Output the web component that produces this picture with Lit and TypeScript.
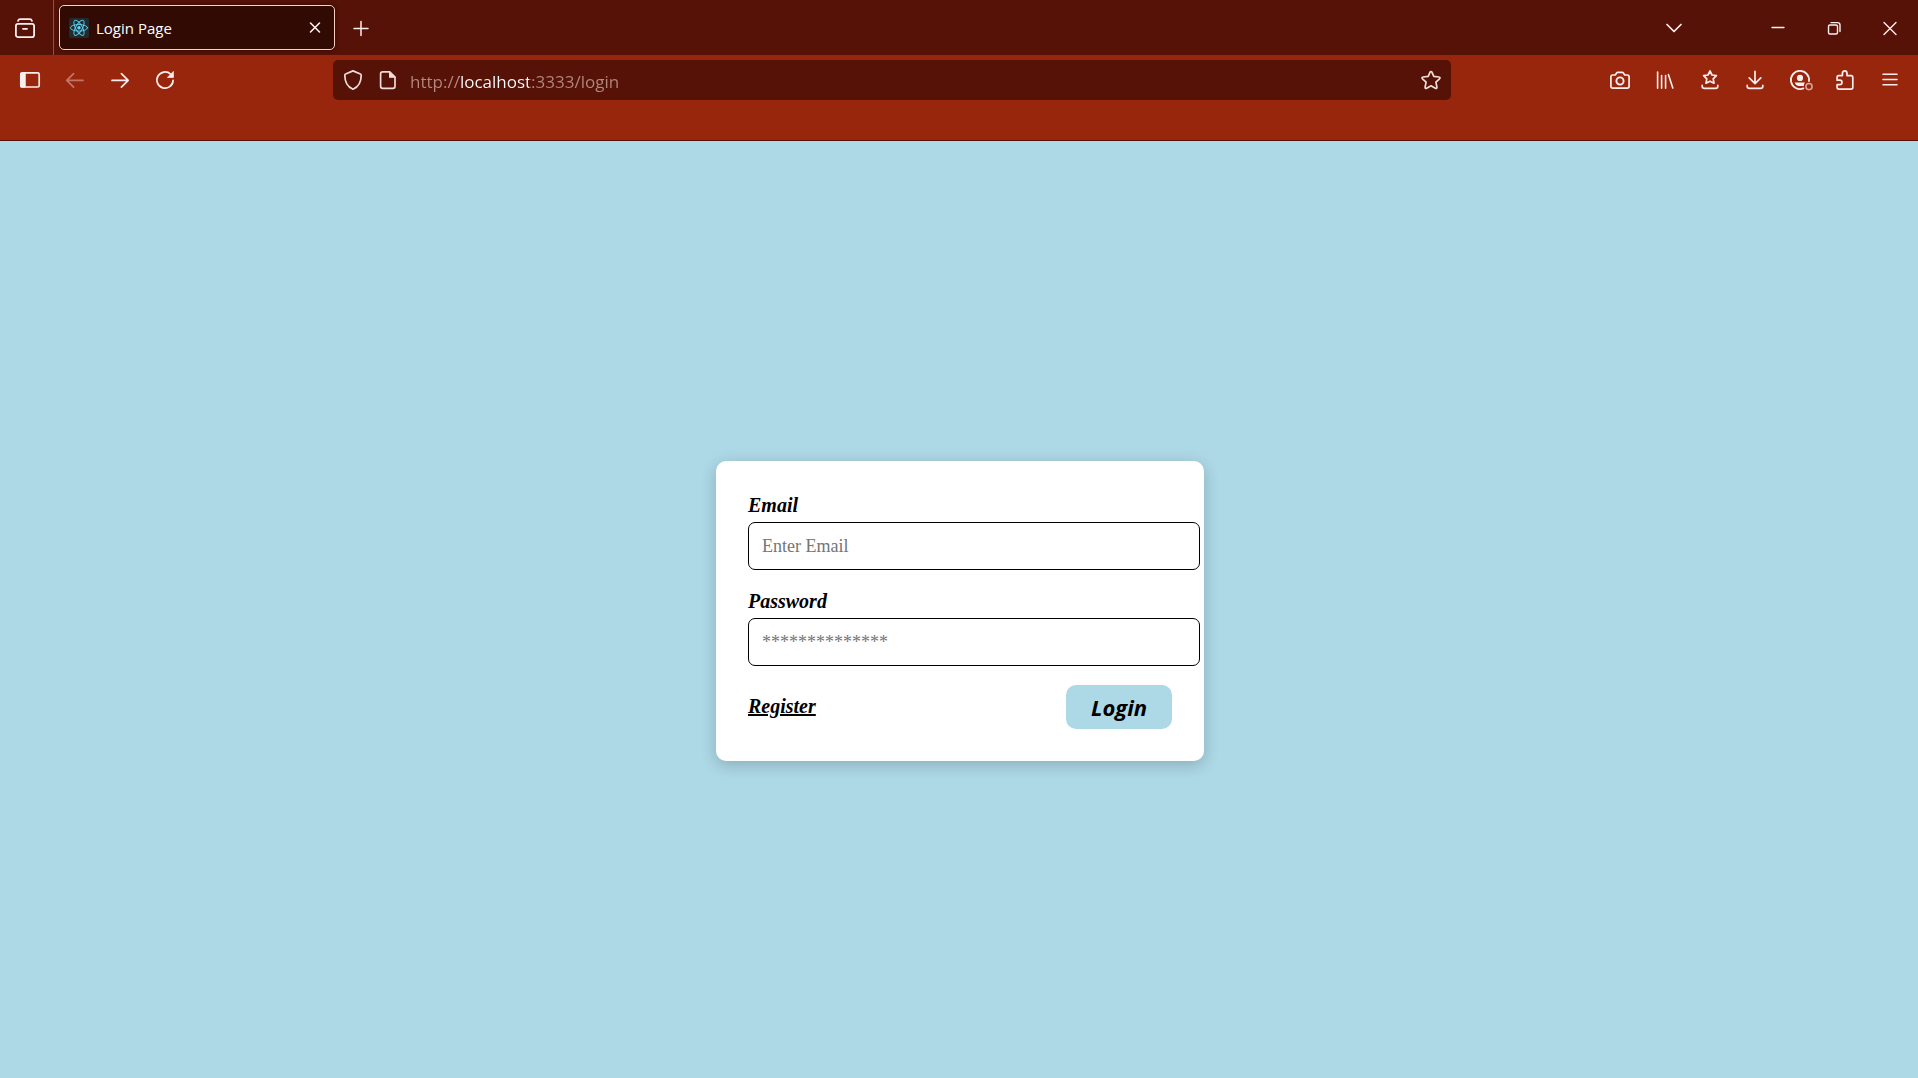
import { LitElement, html, css, svg } from "lit";
import { customElement } from "lit/decorators.js";

const icon = (body: unknown) => html`
  <svg class="icon" width="20" height="20" viewBox="0 0 20 20" fill="none" stroke="currentColor"
    stroke-width="1.7" stroke-linecap="round" stroke-linejoin="round" aria-hidden="true">${body}</svg>`;

const icons = {
  recent: icon(svg`<rect x="0.9" y="5.9" width="18.2" height="13.2" rx="2.2" stroke-width="1.8"/>
    <path d="M3 3 Q3.4 1.2 5.4 1.2 H14.6 Q16.6 1.2 17 3"/><path d="M8 10.8 H12" stroke-width="1.8"/>`),
  react: icon(svg`<rect width="20" height="20" rx="2" fill="#222b30" stroke="none"/>
    <g stroke="#61dafb" stroke-opacity="0.85" stroke-width="1"><ellipse cx="10" cy="9.8" rx="8.6" ry="3.3"/>
    <ellipse cx="10" cy="9.8" rx="8.6" ry="3.3" transform="rotate(60 10 9.8)"/>
    <ellipse cx="10" cy="9.8" rx="8.6" ry="3.3" transform="rotate(120 10 9.8)"/></g>
    <circle cx="10" cy="9.8" r="1.7" fill="#61dafb" stroke="none"/>`),
  closeTab: icon(svg`<path d="M5.5 5 L14.5 14 M14.5 5 L5.5 14" stroke-width="1.6"/>`),
  plus: icon(svg`<path d="M3 10.5 H17 M10 3.5 V17.5" stroke-width="1.5"/>`),
  chevron: icon(svg`<path d="M3 6.5 L10 13.5 L17 6.5"/>`),
  minimize: icon(svg`<path d="M4 9.5 H16" stroke-width="1.3"/>`),
  restore: icon(svg`<rect x="4.5" y="7" width="9" height="9" rx="1.5" stroke-width="1.4"/>
    <path d="M7 4.6 H13.5 Q16 4.6 16 7 V13.5" stroke-width="1.4"/>`),
  closeWindow: icon(svg`<path d="M4 4.5 L16 16.5 M16 4.5 L4 16.5" stroke-width="1.4"/>`),
  sidebar: icon(svg`<rect x="0.8" y="2.8" width="18.4" height="14.2" rx="1.6"/>
    <path d="M1 3 H5.2 V17 H1 Z" fill="currentColor" stroke-width="1"/>`),
  back: icon(svg`<path d="M18 10.4 H2 M8.6 3.6 L1.8 10.4 L8.6 17.2"/>`),
  forward: icon(svg`<path d="M2 10.4 H18 M11.4 3.6 L18.2 10.4 L11.4 17.2"/>`),
  reload: icon(svg`<path d="M15.6 4.2 A8.1 8.1 0 1 0 18.1 10.4"/>
    <path d="M18.4 1.8 V7.4 H12.8 Z" fill="currentColor" stroke-width="0.8"/>`),
  shield: icon(svg`<path d="M10 0.9 L17.4 4 Q18.2 4.3 18.2 5.2 C18.2 12 15.6 16.8 10 19.2 C4.4 16.8 1.8 12 1.8 5.2 Q1.8 4.3 2.6 4 Z"/>`),
  page: icon(svg`<path d="M11.6 1.9 H4.6 Q2.6 1.9 2.6 3.9 V16.3 Q2.6 18.3 4.6 18.3 H15 Q17 18.3 17 16.3 V7.2 Z"/>
    <path d="M11.6 1.9 V7.2 H17 Z" fill="currentColor" stroke-width="1.2"/>`),
  star: icon(svg`<path d="M10 1.5 Q10.6 1.5 10.9 2.2 L12.8 6.4 L17.9 7 Q19.8 7.3 18.5 8.8 L14.9 12.2 L15.9 17 Q16 18.9 14.3 18.2 L10 15.8 L5.7 18.2 Q4 18.9 4.1 17 L5.1 12.2 L1.5 8.8 Q0.2 7.3 2.1 7 L7.2 6.4 L9.1 2.2 Q9.4 1.5 10 1.5 Z"/>`),
  camera: icon(svg`<path d="M2.8 5 H5.3 L6.6 3 Q7 2.3 7.8 2.3 H12.2 Q13 2.3 13.4 3 L14.7 5 H17.2 Q19.1 5 19.1 6.9 V16.3 Q19.1 18.2 17.2 18.2 H2.8 Q0.9 18.2 0.9 16.3 V6.9 Q0.9 5 2.8 5 Z"/>
    <circle cx="10" cy="11" r="3.6" stroke-width="1.9"/>`),
  library: icon(svg`<path d="M2.6 2 V18.3 M6.6 5.5 V18.3 M10.6 5.5 V18.3 M13.4 4.5 L17.8 18" stroke-width="1.6"/>`),
  bookmarks: icon(svg`<path d="M10 1 L12 5 L16.4 5.7 L13.2 8.8 L14 13.2 L10 11.2 L6 13.2 L6.8 8.8 L3.6 5.7 L8 5 Z"/>
    <path d="M2.2 15.4 V16.3 Q2.2 18.4 4.4 18.4 H15.6 Q17.8 18.4 17.8 16.3 V15.4"/>`),
  download: icon(svg`<path d="M10 1.4 V13.2 M4.2 7.8 L10 13.6 L15.8 7.8"/>
    <path d="M2.2 15.4 V16.3 Q2.2 18.4 4.4 18.4 H15.6 Q17.8 18.4 17.8 16.3 V15.4"/>`),
  account: icon(svg`<path d="M13.4 18.4 A9.1 9.1 0 1 1 19 11.2" stroke-width="1.8"/>
    <circle cx="10" cy="7.9" r="3.1" fill="currentColor" stroke="none"/>
    <path d="M4.6 12.4 H15 Q13.8 13.8 13.8 16 H8.4 Q5.6 15.4 4.6 12.4 Z" fill="currentColor" stroke="none"/>
    <circle cx="19" cy="16.6" r="3.1" stroke-opacity="0.65" stroke-width="1.5"/>`),
  extensions: icon(svg`<path d="M3.6 5.6 H7.4 V3.4 Q7.4 0.9 9.7 0.9 Q12 0.9 12 3.4 V5.6 H16 Q17.8 5.6 17.8 7.4 V17.3 Q17.8 19.1 16 19.1 H3.9 Q2.1 19.1 2.1 17.3 V14.6 H4.6 Q7 14.6 7 12.4 Q7 10.2 4.6 10.2 H2.1 V7.4 Q2.1 5.6 3.6 5.6 Z"/>`),
  menu: icon(svg`<path d="M3 4.3 H17 M3 9.5 H17 M3 14.7 H17" stroke-width="1.5"/>`),
};

const action = (label: string, glyph: unknown, disabled = false) => html`
  <button class="tool" type="button" aria-label=${label} ?disabled=${disabled}>${glyph}</button>`;

@customElement("browser-tabs")
class BrowserTabs extends LitElement {
  static styles = css`
    :host { display: flex; align-items: stretch; height: 55px; background: #561206; color: #fbeeee; }
    button { display: flex; align-items: center; justify-content: center; padding: 0; border: 0; background: none; color: inherit; }
    .recent { width: 54px; padding-right: 3px; border-right: 1px solid #8a5148; }
    .tab { box-sizing: border-box; display: flex; align-items: center; gap: 7px; width: 276px; margin: 5px; padding: 0 9px;
      border: 1px solid #fbcfc6; border-radius: 5px; background: #310a03; box-shadow: 0 0 4px rgba(0, 0, 0, 0.5); }
    .title { flex: 1; font: 15px/20px "Open Sans", "Noto Sans", sans-serif; color: #fff; }
    .close { width: 20px; height: 20px; }
    .add { width: 42px; }
    .filler { flex: 1; }
    .list { width: 40px; margin-right: 56px; }
    .window { width: 56px; }
    .icon { display: block; }
  `;
  render() {
    return html`
      <button class="recent" type="button" aria-label="Recent browsing">${icons.recent}</button>
      <div class="tab">${icons.react}<span class="title">Login Page</span>
        <button class="close" type="button" aria-label="Close tab">${icons.closeTab}</button></div>
      <button class="add" type="button" aria-label="New tab">${icons.plus}</button>
      <div class="filler"></div>
      <button class="list" type="button" aria-label="List all tabs">${icons.chevron}</button>
      <button class="window" type="button" aria-label="Minimize">${icons.minimize}</button>
      <button class="window" type="button" aria-label="Restore">${icons.restore}</button>
      <button class="window" type="button" aria-label="Close window">${icons.closeWindow}</button>`;
  }
}

@customElement("browser-toolbar")
class BrowserToolbar extends LitElement {
  static styles = css`
    :host { box-sizing: border-box; display: flex; align-items: flex-start; height: 86px; padding: 5px 6px 0 7px;
      border-bottom: 1px solid #561206; background: #98260c; color: #fbeeee; }
    button { display: flex; align-items: center; justify-content: center; padding: 0; border: 0; background: none; color: inherit; }
    .tool { width: 45px; height: 40px; }
    .tool:disabled { opacity: 0.4; }
    .group { display: flex; }
    .spacer { flex: 0 1 146px; }
    .address { box-sizing: border-box; flex: 1; display: flex; align-items: center; height: 40px; padding: 0 10px;
      border-radius: 5px; background: #561206; color: #f0dcd8; }
    .small { width: 20px; height: 40px; }
    .small + .small { margin-left: 15px; }
    .url { flex: 1; min-width: 0; height: 40px; margin-left: 12px; padding: 3px 0 0; border: 0; outline: 0;
      font: 17px/24px "Open Sans", "Noto Sans", sans-serif; color: transparent;
      background: linear-gradient(90deg, #b28880 49px, #fff 49px 119px, #b28880 119px);
      -webkit-background-clip: text; background-clip: text; }
    .icon { display: block; overflow: visible; }
  `;
  render() {
    return html`
      <div class="group">
        ${action("Sidebar", icons.sidebar)}${action("Back", icons.back, true)}
        ${action("Forward", icons.forward)}${action("Reload", icons.reload)}
      </div>
      <div class="spacer"></div>
      <div class="address">
        <button class="small" type="button" aria-label="Tracking protection">${icons.shield}</button>
        <button class="small" type="button" aria-label="Site information">${icons.page}</button>
        <input class="url" type="text" aria-label="Address" spellcheck="false" value="http://localhost:3333/login">
        <button class="small" type="button" aria-label="Bookmark this page">${icons.star}</button>
      </div>
      <div class="spacer"></div>
      <div class="group">
        ${action("Take screenshot", icons.camera)}${action("Library", icons.library)}
        ${action("Bookmarks", icons.bookmarks)}${action("Downloads", icons.download)}
        ${action("Account", icons.account)}${action("Extensions", icons.extensions)}
        ${action("Menu", icons.menu)}
      </div>`;
  }
}

@customElement("login-form")
class LoginForm extends LitElement {
  static styles = css`
    :host { display: block; }
    .card { display: flex; flex-direction: column; gap: 19px; width: 424px; padding: 32px; border-radius: 10px;
      background: #fff; box-shadow: 0 4px 16px rgba(0, 0, 0, 0.2); color: #000;
      font: italic bold 20px/25px "Liberation Serif", "Times New Roman", serif; }
    .field { display: flex; flex-direction: column; align-items: flex-start; gap: 4px; }
    .input { box-sizing: content-box; width: 100%; height: 20px; padding: 13px; border: 1px solid #000; border-radius: 7px;
      background: #fff; font: 18px/20px "Liberation Serif", "Times New Roman", serif; color: #000; }
    .input::placeholder { color: #757575; opacity: 1; }
    .actions { display: flex; align-items: center; justify-content: space-between; }
    .link { color: #000; text-decoration: underline; text-decoration-thickness: 2px; }
    .submit { height: 44px; width: 106px; padding: 0; border: 0; border-radius: 10px; background: #add8e6; color: #000;
      font: italic bold 22px/24px "Open Sans", "Noto Sans", sans-serif; }
  `;
  private submit(e: Event) { e.preventDefault(); }
  render() {
    return html`
      <form class="card" @submit=${this.submit}>
        <div class="field"><label for="email">Email</label>
          <input class="input" id="email" type="email" placeholder="Enter Email"></div>
        <div class="field"><label for="password">Password</label>
          <input class="input" id="password" type="password" placeholder="**************"></div>
        <div class="actions"><a class="link" href="/register">Register</a>
          <button class="submit" type="submit">Login</button></div>
      </form>`;
  }
}

@customElement("app-root")
class AppRoot extends LitElement {
  static styles = css`
    :host { display: flex; flex-direction: column; min-height: 100vh; background: #add8e6; }
    .page { flex: 1; display: flex; align-items: center; justify-content: center; padding: 2px 0 0 2px; }
  `;
  render() {
    return html`<browser-tabs></browser-tabs><browser-toolbar></browser-toolbar>
      <main class="page"><login-form></login-form></main>`;
  }
}
